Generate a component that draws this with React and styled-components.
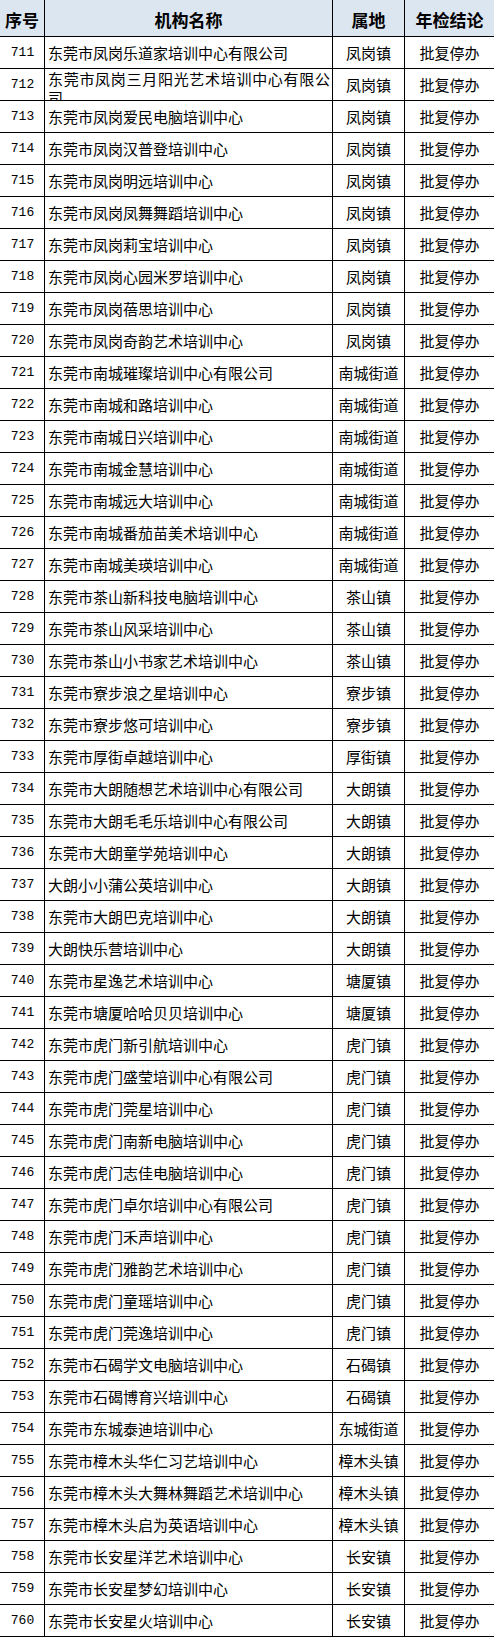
import styled, { createGlobalStyle } from "styled-components";

const rows = [
  ["711", "东莞市凤岗乐道家培训中心有限公司", "凤岗镇"],
  ["712", "东莞市凤岗三月阳光艺术培训中心有限公司", "凤岗镇"],
  ["713", "东莞市凤岗爱民电脑培训中心", "凤岗镇"],
  ["714", "东莞市凤岗汉普登培训中心", "凤岗镇"],
  ["715", "东莞市凤岗明远培训中心", "凤岗镇"],
  ["716", "东莞市凤岗凤舞舞蹈培训中心", "凤岗镇"],
  ["717", "东莞市凤岗莉宝培训中心", "凤岗镇"],
  ["718", "东莞市凤岗心园米罗培训中心", "凤岗镇"],
  ["719", "东莞市凤岗蓓思培训中心", "凤岗镇"],
  ["720", "东莞市凤岗奇韵艺术培训中心", "凤岗镇"],
  ["721", "东莞市南城璀璨培训中心有限公司", "南城街道"],
  ["722", "东莞市南城和路培训中心", "南城街道"],
  ["723", "东莞市南城日兴培训中心", "南城街道"],
  ["724", "东莞市南城金慧培训中心", "南城街道"],
  ["725", "东莞市南城远大培训中心", "南城街道"],
  ["726", "东莞市南城番茄苗美术培训中心", "南城街道"],
  ["727", "东莞市南城美瑛培训中心", "南城街道"],
  ["728", "东莞市茶山新科技电脑培训中心", "茶山镇"],
  ["729", "东莞市茶山风采培训中心", "茶山镇"],
  ["730", "东莞市茶山小书家艺术培训中心", "茶山镇"],
  ["731", "东莞市寮步浪之星培训中心", "寮步镇"],
  ["732", "东莞市寮步悠可培训中心", "寮步镇"],
  ["733", "东莞市厚街卓越培训中心", "厚街镇"],
  ["734", "东莞市大朗随想艺术培训中心有限公司", "大朗镇"],
  ["735", "东莞市大朗毛毛乐培训中心有限公司", "大朗镇"],
  ["736", "东莞市大朗童学苑培训中心", "大朗镇"],
  ["737", "大朗小小蒲公英培训中心", "大朗镇"],
  ["738", "东莞市大朗巴克培训中心", "大朗镇"],
  ["739", "大朗快乐营培训中心", "大朗镇"],
  ["740", "东莞市星逸艺术培训中心", "塘厦镇"],
  ["741", "东莞市塘厦哈哈贝贝培训中心", "塘厦镇"],
  ["742", "东莞市虎门新引航培训中心", "虎门镇"],
  ["743", "东莞市虎门盛莹培训中心有限公司", "虎门镇"],
  ["744", "东莞市虎门莞星培训中心", "虎门镇"],
  ["745", "东莞市虎门南新电脑培训中心", "虎门镇"],
  ["746", "东莞市虎门志佳电脑培训中心", "虎门镇"],
  ["747", "东莞市虎门卓尔培训中心有限公司", "虎门镇"],
  ["748", "东莞市虎门禾声培训中心", "虎门镇"],
  ["749", "东莞市虎门雅韵艺术培训中心", "虎门镇"],
  ["750", "东莞市虎门童瑶培训中心", "虎门镇"],
  ["751", "东莞市虎门莞逸培训中心", "虎门镇"],
  ["752", "东莞市石碣学文电脑培训中心", "石碣镇"],
  ["753", "东莞市石碣博育兴培训中心", "石碣镇"],
  ["754", "东莞市东城泰迪培训中心", "东城街道"],
  ["755", "东莞市樟木头华仁习艺培训中心", "樟木头镇"],
  ["756", "东莞市樟木头大舞林舞蹈艺术培训中心", "樟木头镇"],
  ["757", "东莞市樟木头启为英语培训中心", "樟木头镇"],
  ["758", "东莞市长安星洋艺术培训中心", "长安镇"],
  ["759", "东莞市长安星梦幻培训中心", "长安镇"],
  ["760", "东莞市长安星火培训中心", "长安镇"],
];

const GlobalStyle = createGlobalStyle`
  html, body {
    margin: 0;
    padding: 0;
    background: #fff;
  }
  body {
    font-family: "Noto Sans CJK SC", "Noto Sans", sans-serif;
    color: #000;
  }
`;

const Sheet = styled.div`
  width: 494px;
  display: flex;
  flex-direction: column;
`;

const Row = styled.div`
  display: grid;
  grid-template-columns: 45px 288px 72px 89px;
  height: ${(p) => (p.$head ? "37px" : "32px")};
  background: ${(p) => (p.$head ? "#dce6f1" : "#fff")};
`;

const Cell = styled.div`
  box-sizing: border-box;
  border-bottom: 1px solid #000;
  border-right: ${(p) => (p.$last ? "none" : "1px solid #000")};
  display: flex;
  align-items: safe center;
  justify-content: ${(p) => (p.$left ? "flex-start" : "center")};
  overflow: hidden;
  padding: ${(p) => (p.$left ? "0 2px 0 3px" : "0")};
  font-size: 15px;
  line-height: 19px;
  white-space: ${(p) => (p.$left ? "normal" : "nowrap")};
`;

const HeadCell = styled(Cell)`
  font-size: 17px;
  font-weight: 700;
  padding-top: 2px;
`;

const Num = styled.span`
  font-family: "Liberation Mono", "DejaVu Sans Mono", monospace;
  font-size: 13px;
  padding-left: 1px;
`;

const Name = styled.span`
  display: block;
  width: 100%;
  text-align: justify;
`;

export default function App() {
  return (
    <Sheet>
      <GlobalStyle />
      <Row $head>
        <HeadCell>序号</HeadCell>
        <HeadCell>机构名称</HeadCell>
        <HeadCell>属地</HeadCell>
        <HeadCell $last>年检结论</HeadCell>
      </Row>
      {rows.map(([no, name, area]) => (
        <Row key={no}>
          <Cell>
            <Num>{no}</Num>
          </Cell>
          <Cell $left>
            <Name>{name}</Name>
          </Cell>
          <Cell>{area}</Cell>
          <Cell $last>批复停办</Cell>
        </Row>
      ))}
    </Sheet>
  );
}
